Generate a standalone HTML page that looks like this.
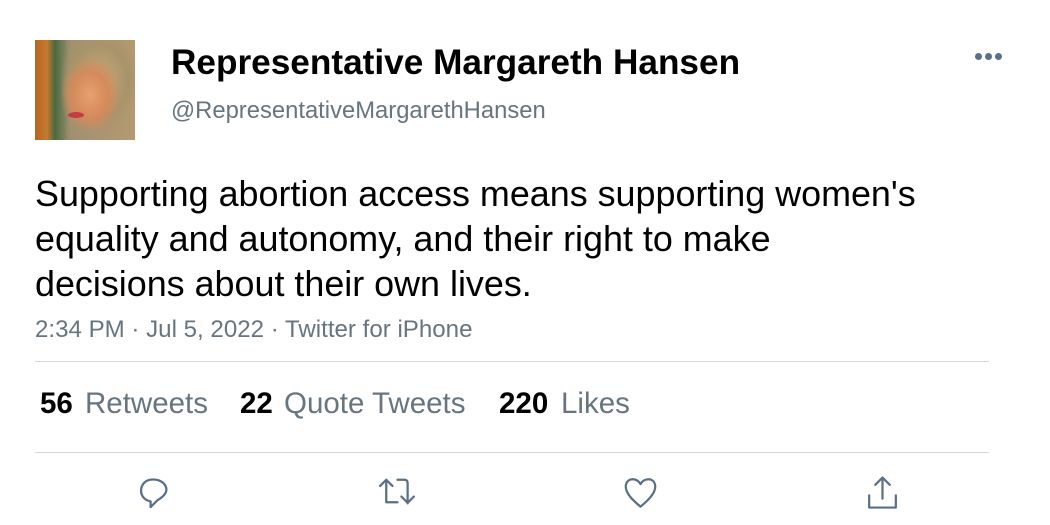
<!DOCTYPE html>
<html><head><meta charset="utf-8"><style>
body{margin:0;width:1050px;height:525px;background:#fff;font-family:"Liberation Sans",Arial,sans-serif;position:relative;overflow:hidden}
.abs{position:absolute;white-space:nowrap}
.av{left:35px;top:40px;width:100px;height:100px;background:
radial-gradient(ellipse 30px 38px at 55px 55px,#e8a070 0%,#d48a5a 60%,transparent 100%),
radial-gradient(ellipse 40px 50px at 65px 40px,#c9a878 0%,#a8946a 70%,transparent 100%),
linear-gradient(90deg,#b8641e 0%,#c47a30 12%,#4a6a40 20%,#a09070 35%,#b49a70 100%)}
.mouth{width:16px;height:6px;background:#c43c44;border-radius:50%}
.name{left:171px;top:43px;font-size:35.2px;font-weight:bold;color:#000}
.handle{left:171px;top:97px;font-size:23.8px;color:#66757f}
.txt{left:35px;top:172px;font-size:35.9px;line-height:45px;color:#000}
.meta{left:35px;top:316px;font-size:24.1px;color:#66757f}
.hr{left:35px;width:954px;height:1px;background:#d6d9dc}
.s{top:387px;font-size:29.5px;color:#66757f}
.b{color:#000;font-weight:bold}
.dot{width:7px;height:7px;border-radius:50%;background:#5b6f86;top:53px}
svg{position:absolute}
</style></head><body>
<div class="abs av"></div>
<div class="abs mouth" style="left:68px;top:112px"></div>
<div class="abs name">Representative Margareth Hansen</div>
<div class="abs handle">@RepresentativeMargarethHansen</div>
<div class="abs dot" style="left:975px"></div><div class="abs dot" style="left:985px"></div><div class="abs dot" style="left:995px"></div>
<div class="abs txt">Supporting abortion access means supporting women's<br>equality and autonomy, and their right to make<br>decisions about their own lives.</div>
<div class="abs meta">2:34 PM · Jul 5, 2022 · Twitter for iPhone</div>
<div class="abs hr" style="top:361px"></div>
<div class="abs s b" style="left:40px">56</div><div class="abs s" style="left:85px">Retweets</div>
<div class="abs s b" style="left:240px">22</div><div class="abs s" style="left:284px">Quote Tweets</div>
<div class="abs s b" style="left:499px">220</div><div class="abs s" style="left:561px">Likes</div>
<div class="abs hr" style="top:452px"></div>
<svg style="left:136px;top:475px" width="36" height="36" viewBox="0 0 32 32" fill="none" stroke="#5b6f86" stroke-width="2" stroke-linejoin="round"><path d="M15 4C8.5 4 4.5 8.5 4.5 14c0 5 3.5 8.5 8.5 9.5v5l6-6c5-3 8-6.5 8-9.5C27 8 22 4 15 4z"/></svg>
<svg style="left:375px;top:473px" width="45" height="36" viewBox="0 0 40 32" fill="none" stroke="#5b6f86" stroke-width="2" stroke-linecap="round" stroke-linejoin="round"><path d="M10 26V6M4.5 11.5 10 6l5.5 5.5M10 26h10M20 6h6c2 0 3 1 3 3v18M23.5 21l5.5 5.5 5.5-5.5"/></svg>
<svg style="left:618px;top:474px" width="45" height="36" viewBox="0 0 40 32" fill="none" stroke="#5b6f86" stroke-width="2" stroke-linejoin="round"><path d="M20 9C17 3 8 3 7 10c-1 7 7 14 13 19 6-5 14-12 13-19-1-7-10-7-13-1z"/></svg>
<svg style="left:860px;top:472px" width="45" height="40" viewBox="0 0 40 36" fill="none" stroke="#5b6f86" stroke-width="2" stroke-linecap="round" stroke-linejoin="round"><path d="M20 24V5M13.5 11.5 20 5l6.5 6.5M8 21v11h24V21"/></svg>
</body></html>
